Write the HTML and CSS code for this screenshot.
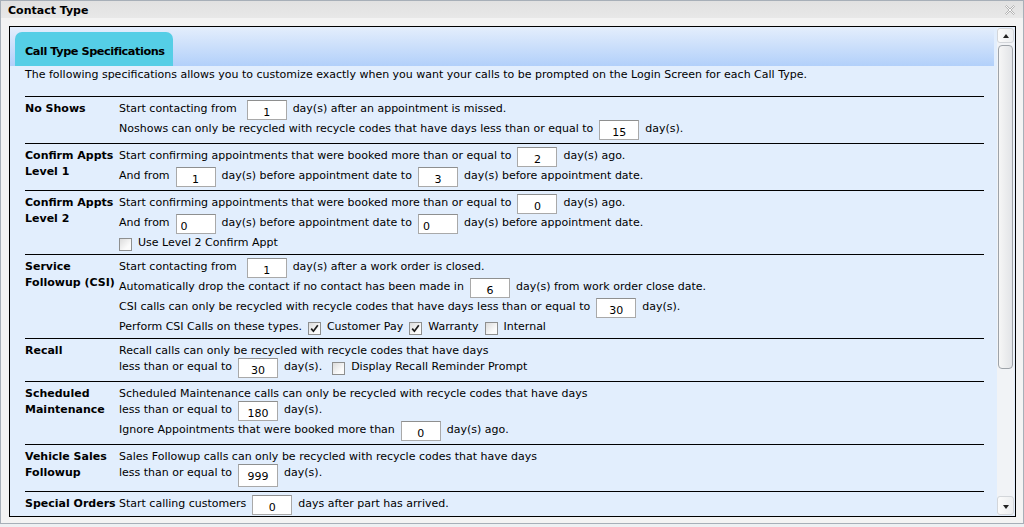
FILE: index.html
```html
<!DOCTYPE html>
<html>
<head>
<meta charset="utf-8">
<title>Contact Type</title>
<link rel="stylesheet" href="styles.css">
</head>
<body>
<div class="window">
  <div class="titlebar">
    <span class="title">Contact Type</span>
    <svg class="close" viewBox="0 0 10 10" width="10" height="10"><polygon points="0.5,1.5 1.5,0.5 5,4 8.5,0.5 9.5,1.5 6,5 9.5,8.5 8.5,9.5 5,6 1.5,9.5 0.5,8.5 4,5" fill="#fafafa" stroke="#a3a3a3" stroke-width="0.8" stroke-linejoin="round"/></svg>
  </div>
  <div class="frame">
    <div class="content">
      <div class="band"><div class="tab">Call Type Specifications</div></div>
      <p class="desc">The following specifications allows you to customize exactly when you want your calls to be prompted on the Login Screen for each Call Type.</p>
      <div class="rows">
        <div class="row">
          <div class="label">No Shows</div>
          <div class="body">
            <div class="ln"><span>Start contacting from</span><input class="num wide" value="1" readonly><span>day(s) after an appointment is missed.</span></div>
            <div class="ln"><span>Noshows can only be recycled with recycle codes that have days less than or equal to</span><input class="num" value="15" readonly><span>day(s).</span></div>
          </div>
        </div>
        <div class="row">
          <div class="label">Confirm Appts<br>Level 1</div>
          <div class="body">
            <div class="ln"><span>Start confirming appointments that were booked more than or equal to</span><input class="num" value="2" readonly><span>day(s) ago.</span></div>
            <div class="ln"><span>And from</span><input class="num" value="1" readonly><span>day(s) before appointment date to</span><input class="num" value="3" readonly><span>day(s) before appointment date.</span></div>
          </div>
        </div>
        <div class="row">
          <div class="label">Confirm Appts<br>Level 2</div>
          <div class="body">
            <div class="ln"><span>Start confirming appointments that were booked more than or equal to</span><input class="num" value="0" readonly><span>day(s) ago.</span></div>
            <div class="ln"><span>And from</span><input class="num left" value="0" readonly><span>day(s) before appointment date to</span><input class="num left" value="0" readonly><span>day(s) before appointment date.</span></div>
            <div class="ln c"><span class="cb"></span><span>Use Level 2 Confirm Appt</span></div>
          </div>
        </div>
        <div class="row">
          <div class="label">Service<br>Followup (CSI)</div>
          <div class="body">
            <div class="ln"><span>Start contacting from</span><input class="num wide" value="1" readonly><span>day(s) after a work order is closed.</span></div>
            <div class="ln"><span>Automatically drop the contact if no contact has been made in</span><input class="num" value="6" readonly><span>day(s) from work order close date.</span></div>
            <div class="ln"><span>CSI calls can only be recycled with recycle codes that have days less than or equal to</span><input class="num" value="30" readonly><span>day(s).</span></div>
            <div class="ln c"><span>Perform CSI Calls on these types.</span><span class="cb on"><svg viewBox="0 0 11 11" width="11" height="11"><path d="M2.2 5.6 L4.4 8.2 L8.8 2.2" fill="none" stroke="#1e1e1e" stroke-width="1.7"/></svg></span><span>Customer Pay</span><span class="cb on"><svg viewBox="0 0 11 11" width="11" height="11"><path d="M2.2 5.6 L4.4 8.2 L8.8 2.2" fill="none" stroke="#1e1e1e" stroke-width="1.7"/></svg></span><span>Warranty</span><span class="cb"></span><span>Internal</span></div>
          </div>
        </div>
        <div class="row">
          <div class="label">Recall</div>
          <div class="body">
            <div class="ln t"><span>Recall calls can only be recycled with recycle codes that have days</span></div>
            <div class="ln"><span>less than or equal to</span><input class="num" value="30" readonly><span>day(s).</span><span class="cb in"></span><span>Display Recall Reminder Prompt</span></div>
          </div>
        </div>
        <div class="row">
          <div class="label">Scheduled<br>Maintenance</div>
          <div class="body">
            <div class="ln t"><span>Scheduled Maintenance calls can only be recycled with recycle codes that have days</span></div>
            <div class="ln"><span>less than or equal to</span><input class="num" value="180" readonly><span>day(s).</span></div>
            <div class="ln"><span>Ignore Appointments that were booked more than</span><input class="num" value="0" readonly><span>day(s) ago.</span></div>
          </div>
        </div>
        <div class="row">
          <div class="label">Vehicle Sales<br>Followup</div>
          <div class="body">
            <div class="ln t"><span>Sales Followup calls can only be recycled with recycle codes that have days</span></div>
            <div class="ln tall"><span>less than or equal to</span><input class="num hi" value="999" readonly><span>day(s).</span></div>
          </div>
        </div>
        <div class="row">
          <div class="label">Special Orders</div>
          <div class="body">
            <div class="ln"><span>Start calling customers</span><input class="num" value="0" readonly><span>days after part has arrived.</span></div>
          </div>
        </div>
      </div>
    </div>
    <div class="sb">
      <div class="sbtn up"><span class="arr-up"></span></div>
      <div class="thumb"></div>
      <div class="track"></div>
      <div class="sbtn down"><span class="arr-down"></span></div>
    </div>
  </div>
</div>
</body>
</html>
```
FILE: styles.css
```css
html, body {
  margin: 0;
  padding: 0;
}
body {
  width: 1024px;
  height: 527px;
  overflow: hidden;
  background: #eef0f2;
  font-family: "DejaVu Sans", sans-serif;
  font-size: 11px;
  color: #000;
}
.window {
  box-sizing: border-box;
  height: 524px;
  border: 1px solid #a7afb8;
  background: #f3f3f3;
  display: flex;
  flex-direction: column;
}
.titlebar {
  flex: none;
  height: 17px;
  display: flex;
  align-items: center;
  justify-content: space-between;
  padding: 0 7px;
  background: linear-gradient(#e1e1e1, #e8e8e8);
  font-weight: bold;
}
.title {
  line-height: 17px;
  padding-top: 1px;
}
.close {
  display: block;
  margin-right: 1px;
}
.frame {
  flex: 1;
  min-height: 0;
  margin: 8px 7px 6px 8px;
  border: 1px solid #000;
  background: #e2eefd;
  display: flex;
}
.content {
  flex: 1;
  min-width: 0;
  overflow: hidden;
}
.band {
  height: 39px;
  box-sizing: border-box;
  padding-left: 5px;
  display: flex;
  align-items: flex-end;
  background: linear-gradient(#e4eefc, #b2d0fa);
}
.tab {
  box-sizing: border-box;
  width: 158px;
  height: 34px;
  padding: 5px 0 0 10px;
  line-height: 29px;
  border-radius: 7px 7px 0 0;
  background: #55cee6;
  font-weight: bold;
  font-size: 11.3px;
  letter-spacing: -0.45px;
  white-space: nowrap;
}
.desc {
  margin: 1px 0 14px 0;
  padding-left: 15px;
  line-height: 15px;
  height: 15px;
  white-space: nowrap;
}
.rows {
  margin: 0 10px 0 15px;
}
.row {
  display: grid;
  grid-template-columns: 94px 1fr;
  border-top: 1px solid #000;
  padding: 3px 0;
}
.label {
  font-weight: bold;
  line-height: 16px;
  padding-top: 1px;
  white-space: nowrap;
}
.body {
  min-width: 0;
}
.ln {
  display: flex;
  align-items: flex-start;
  gap: 6px;
  height: 20px;
  line-height: 16px;
  white-space: nowrap;
}
.ln > span:not(.cb) {
  padding-top: 1px;
}
.ln.t {
  height: 16px;
}
.ln.c {
  height: 17px;
}
.ln.tall {
  height: 24px;
}
.num {
  box-sizing: border-box;
  flex: none;
  width: 40px;
  height: 20px;
  margin: 0;
  padding: 4px 2px 0;
  border: 1px solid #a9a9a9;
  border-top-color: #8e8f8f;
  border-radius: 0;
  background: #fff;
  font-family: "DejaVu Sans", sans-serif;
  font-size: 11px;
  line-height: 14px;
  color: #000;
  text-align: center;
  outline: none;
}
.num.wide {
  margin-left: 4px;
}
.num.left {
  text-align: left;
  padding-left: 4px;
}
.num.hi {
  height: 23px;
  padding-top: 2px;
}
.cb {
  flex: none;
  box-sizing: border-box;
  width: 13px;
  height: 13px;
  margin-top: 4px;
  border: 1px solid #8e8f8f;
  background: linear-gradient(135deg, #dcdcdc, #fbfbfb 70%);
  display: flex;
  align-items: center;
  justify-content: center;
}
.cb svg {
  display: block;
}
.cb.in {
  margin-left: 4px;
}
.sb {
  flex: none;
  width: 17px;
  margin: 1px 1px 1px 3px;
  display: flex;
  flex-direction: column;
  background: #f1f3f6;
}
.sbtn {
  box-sizing: border-box;
  flex: none;
  border: 1px solid #d3d6da;
  border-radius: 3px;
  background: linear-gradient(90deg, #fbfbfb, #eceef0);
  display: flex;
  align-items: center;
  justify-content: center;
}
.sbtn.up {
  height: 15px;
}
.sbtn.down {
  height: 19px;
}
.arr-up {
  width: 0;
  height: 0;
  border-left: 3.5px solid transparent;
  border-right: 3.5px solid transparent;
  border-bottom: 4px solid #222;
}
.arr-down {
  width: 0;
  height: 0;
  margin-top: 2px;
  border-left: 3.5px solid transparent;
  border-right: 3.5px solid transparent;
  border-top: 4px solid #222;
}
.thumb {
  flex: none;
  box-sizing: border-box;
  height: 324px;
  margin: 2px 1px 0;
  border: 1px solid #9ea3a9;
  border-radius: 4px;
  background: linear-gradient(90deg, #f6f6f6, #e2e4e7);
}
.track {
  flex: 1;
}
```
